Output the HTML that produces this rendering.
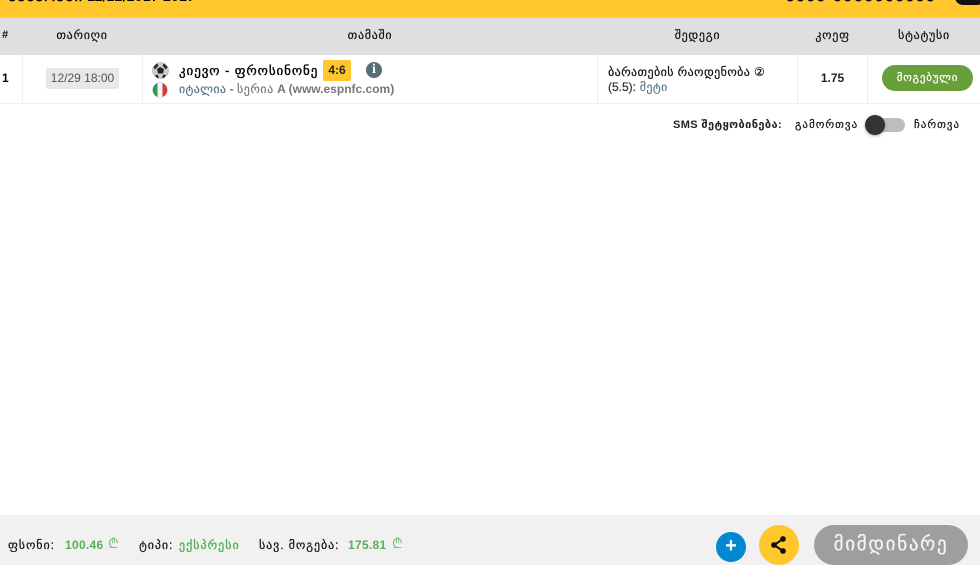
<!DOCTYPE html>
<html lang="ka"><head><meta charset="utf-8">
<style>
html,body{margin:0;padding:0}
body{width:980px;height:565px;position:relative;overflow:hidden;background:#fff;font-family:"Liberation Sans","DejaVu Sans",sans-serif;color:#000}
.a{position:absolute;white-space:nowrap}
.c{text-align:center}
.th{top:18px;height:37px;line-height:35px;font-size:12px;text-align:center;color:#111;letter-spacing:.7px;-webkit-text-stroke:.2px #111}
.line{position:absolute;top:55px;width:1px;height:48px;background:#eee}
.g{color:#55b059;font-weight:bold}
.fl{font-size:12px;color:#111;letter-spacing:.9px;-webkit-text-stroke:.2px #111}
</style></head><body>
<div class="a" style="left:0;top:0;width:980px;height:17px;background:#ffc72c"></div>
<div class="a" style="left:0;top:17px;width:980px;height:1px;background:#d0d0d0"></div>
<div class="a" style="left:8px;top:-13px;font-size:14px;font-weight:bold;line-height:18px;letter-spacing:.25px">ᲔᲥᲡᲞᲠᲔᲡᲘ 11/12/2017 2017</div>
<div class="a" style="left:786px;top:-13px;font-size:14px;font-weight:bold;line-height:18px;letter-spacing:1.8px">ᲐᲐᲐᲐ ᲖᲐᲡᲐᲑᲐᲐᲐᲐᲐ</div>
<div class="a" style="left:955px;top:-12px;width:30px;height:17px;background:#111;border-radius:8px"></div>

<div class="a" style="left:0;top:18px;width:980px;height:37px;background:#dfdfdf"></div>
<div class="a th" style="left:0;width:10px;font-weight:bold;font-size:11px;letter-spacing:0;-webkit-text-stroke:0">#</div>
<div class="a th" style="left:22px;width:120px">თარიღი</div>
<div class="a th" style="left:143px;width:454px">თამაში</div>
<div class="a th" style="left:598px;width:199px">შედეგი</div>
<div class="a th" style="left:798px;width:69px">კოეფ</div>
<div class="a th" style="left:868px;width:112px">სტატუსი</div>

<div class="line" style="left:22px"></div>
<div class="line" style="left:142px"></div>
<div class="line" style="left:597px"></div>
<div class="line" style="left:797px"></div>
<div class="line" style="left:867px"></div>
<div class="a" style="left:0;top:103px;width:980px;height:1px;background:#eee"></div>

<div class="a" style="left:2px;top:71px;font-size:12px;font-weight:bold;line-height:14px">1</div>
<div class="a c" style="left:46px;top:68px;width:73px;height:21px;line-height:21px;background:#e8e8e8;border-radius:2px;font-size:12px;color:#555">12/29 18:00</div>

<svg class="a" style="left:152px;top:62px" width="17" height="17" viewBox="0 0 17 17"><circle cx="8.500" cy="8.500" r="8" fill="#ccc" stroke="#999" stroke-width=".5"/><path d="M8 5l4 2-1 4.500H6L5 7zM1.500 5L5 1.500l1.500 2-3.500 4zM15.500 5L12 1.500 10.500 3.500 14 7.500zM3 13.500l2.500-1 1.500 3-2 .5zM14 13l-2.500-.5-1.500 3 2 .5z" fill="#222"/></svg>
<svg class="a" style="left:152px;top:82px" width="16" height="16" viewBox="0 0 16 16"><defs><clipPath id="k"><circle cx="8" cy="8" r="7.500"/></clipPath></defs><g clip-path="url(#k)"><rect width="5.500" height="16" fill="#2f9a4a"/><rect x="5.500" width="5" height="16" fill="#f4f4f4"/><rect x="10.500" width="5.500" height="16" fill="#d9363e"/></g><circle cx="8" cy="8" r="7.500" fill="none" stroke="#ccc" stroke-width=".5"/></svg>

<div class="a" style="left:179px;top:62px;font-size:13px;line-height:18px;letter-spacing:.92px;-webkit-text-stroke:.35px #000">კიევო - ფროსინონე</div>
<div class="a c" style="left:323px;top:60px;width:28px;height:21px;line-height:21px;background:#ffc72c;border-radius:2px;font-size:12px;font-weight:bold;color:#222">4:6</div>
<div class="a c" style="left:366px;top:62px;width:16px;height:16px;border-radius:8px;background:#546e7a;color:#fff;font:bold 14px/16px 'Liberation Serif',serif">i</div>
<div class="a" style="left:179px;top:81px;font-size:12px;line-height:16px;font-weight:bold;color:#777"><span style="color:#4f7186;font-weight:normal;letter-spacing:.35px;-webkit-text-stroke:.15px #4f7186">იტალია</span> - <span style="font-weight:normal;letter-spacing:.5px;-webkit-text-stroke:.15px #777">სერია</span> A (www.espnfc.com)</div>

<div class="a" style="left:608px;top:65px;font-size:12px;line-height:15px;color:#111;letter-spacing:.4px;-webkit-text-stroke:.2px #111">ბარათების რაოდენობა ②<br><span style="color:#333;letter-spacing:0;-webkit-text-stroke:.2px #333">(5.5):</span> <span style="color:#4f7186;-webkit-text-stroke:.1px #4f7186">მეტი</span></div>
<div class="a c" style="left:798px;top:70px;width:69px;font-size:12px;font-weight:bold;line-height:16px;color:#222">1.75</div>
<div class="a c" style="left:882px;top:65px;width:91px;height:26px;line-height:26px;border-radius:13px;background:#689f38;color:#fff;font-size:11px;letter-spacing:.8px;-webkit-text-stroke:.25px #fff">მოგებული</div>

<div class="a" style="left:673px;top:118px;font-size:11px;font-weight:bold;line-height:14px;color:#222;letter-spacing:.4px">SMS შეტყობინება:</div>
<div class="a" style="left:795px;top:118px;font-size:11px;line-height:14px;color:#111;letter-spacing:1px;-webkit-text-stroke:.2px #111">გამორთვა</div>
<div class="a" style="left:866px;top:118px;width:39px;height:14px;border-radius:7px;background:#bdbdbd"></div>
<div class="a" style="left:865px;top:115px;width:20px;height:20px;border-radius:10px;background:#333;box-shadow:0 1px 3px rgba(0,0,0,.3)"></div>
<div class="a" style="left:914px;top:118px;font-size:11px;line-height:14px;color:#111;letter-spacing:1px;-webkit-text-stroke:.2px #111">ჩართვა</div>

<div class="a" style="left:0;top:515px;width:980px;height:50px;background:#f1f1f1"></div>
<div class="a fl" style="left:8px;top:537px;line-height:16px">ფსონი:</div>
<div class="a g" style="left:65px;top:537px;font-size:12px;line-height:16px;letter-spacing:.3px">100.46</div>
<div class="a" style="left:108px;top:536px;font-size:14px;line-height:14px;color:#7cc47f">₾</div>
<div class="a fl" style="left:139px;top:537px;line-height:16px">ტიპი:</div>
<div class="a" style="left:179px;top:537px;font-size:12px;line-height:16px;color:#4caf50;letter-spacing:1px;-webkit-text-stroke:.3px #4caf50">ექსპრესი</div>
<div class="a fl" style="left:259px;top:537px;line-height:16px">სავ. მოგება:</div>
<div class="a g" style="left:348px;top:537px;font-size:12px;line-height:16px;letter-spacing:.3px">175.81</div>
<div class="a" style="left:392px;top:536px;font-size:14px;line-height:14px;color:#7cc47f">₾</div>

<div class="a c" style="left:716px;top:532px;width:30px;height:30px;border-radius:15px;background:#0288d1;color:#fff;font-size:20px;font-weight:bold;line-height:29px">+</div>
<div class="a" style="left:759px;top:525px;width:40px;height:40px;border-radius:20px;background:#ffc72c"></div>
<svg class="a" style="left:769px;top:535px" width="20" height="20" viewBox="0 0 20 20"><path d="M14 4L5 10l9 6" fill="none" stroke="#111" stroke-width="2"/><circle cx="14" cy="4" r="2.900" fill="#111"/><circle cx="5" cy="10" r="2.900" fill="#111"/><circle cx="14" cy="16" r="2.900" fill="#111"/></svg>
<div class="a c" style="left:814px;top:525px;width:154px;height:40px;line-height:39px;border-radius:20px;background:#9e9e9e;color:#f3f3f3;font-size:19px;letter-spacing:1.700px;-webkit-text-stroke:.3px #f3f3f3">მიმდინარე</div>
</body></html>
